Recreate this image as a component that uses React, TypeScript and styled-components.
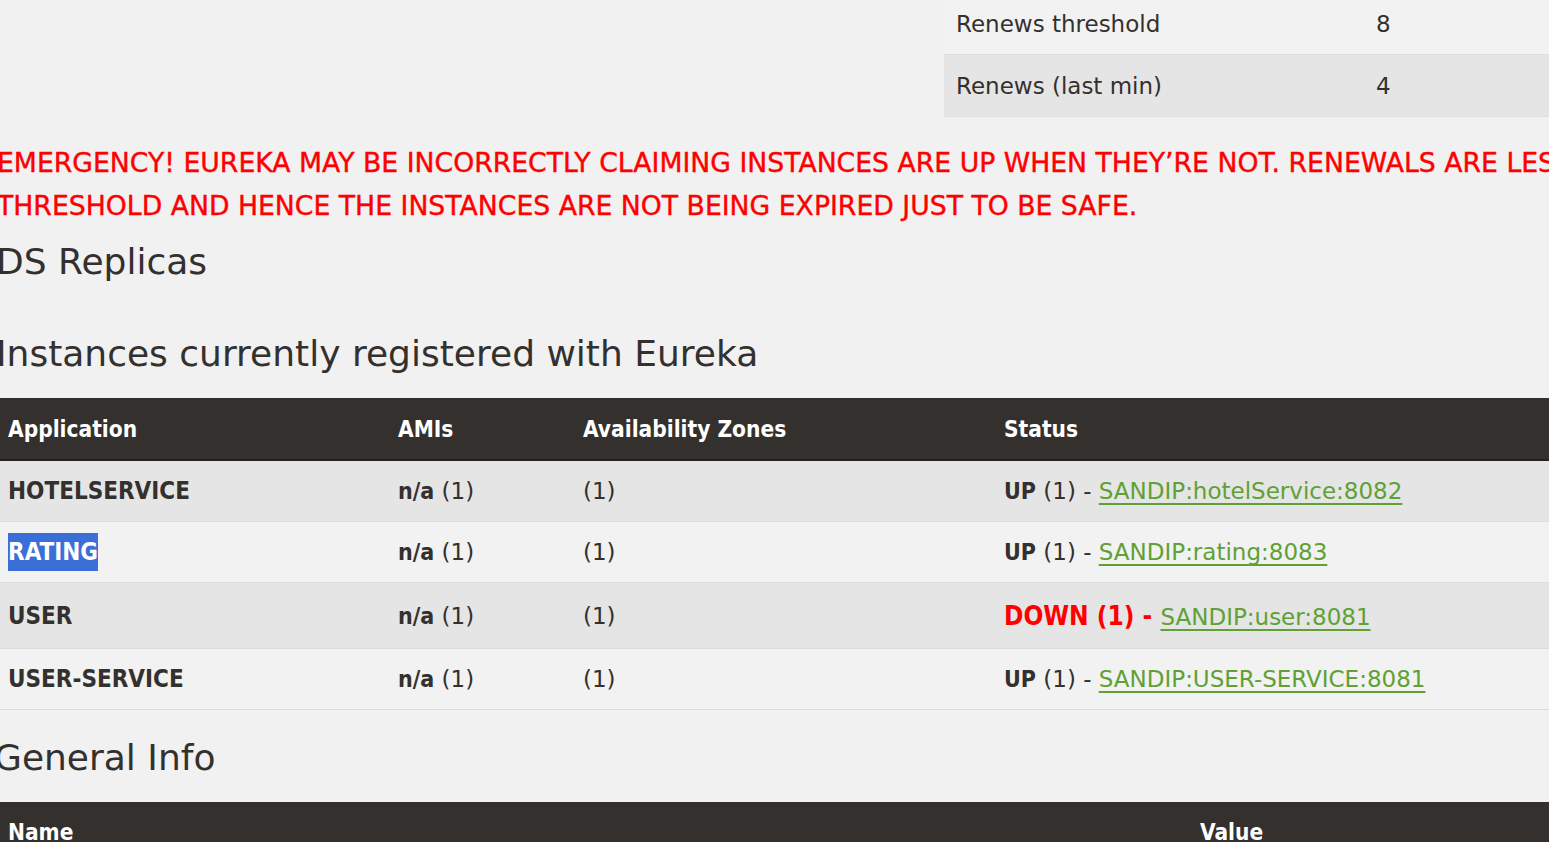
import styled, { createGlobalStyle } from "styled-components";

const Global = createGlobalStyle`
  html, body {
    margin: 0;
    padding: 0;
    background: #f1f1f1;
    overflow: hidden;
  }
  body {
    font-family: "DejaVu Sans", "Noto Sans", sans-serif;
    color: #33302e;
  }
`;

const Page = styled.div`
  width: 1549px;
  margin-top: -7px;
  overflow: hidden;
`;

const StatusGrid = styled.div`
  display: grid;
  grid-template-columns: 944px 1fr;
`;

const InfoTable = styled.table`
  grid-column: 2;
  width: 100%;
  border-collapse: collapse;
  font-size: 23px;
`;

const InfoRow = styled.tr<{ $shade?: boolean }>`
  background: ${(p) => (p.$shade ? "#e5e5e5" : "#f2f2f2")};
  border-bottom: 1px solid #dedede;
  td {
    height: 61px;
    padding: 0 12px;
    vertical-align: middle;
  }
  td:first-child {
    width: 396px;
  }
`;

const Emergency = styled.h4`
  margin: 24px 0 0 -3px;
  font-size: 26.7px;
  font-weight: 400;
  line-height: 43px;
  color: #ff0000;
  -webkit-text-stroke: 0.4px #ff0000;
  text-transform: uppercase;
  white-space: nowrap;
`;

const Heading = styled.h1`
  margin: 0 0 0 -4px;
  font-size: 36px;
  font-weight: 400;
  color: #33302e;
  line-height: 1.2;
`;

const Replicas = styled(Heading)`
  margin-top: 13px;
`;

const InstancesTitle = styled(Heading)`
  margin-top: 49px;
  margin-bottom: 23px;
`;

const GeneralTitle = styled(Heading)`
  margin-top: 26px;
  margin-left: -6px;
`;

const Table = styled.table`
  width: 100%;
  border-collapse: collapse;
  font-size: 23px;
`;

const HeadRow = styled.tr`
  background: #34302d;
  color: #ffffff;
  th {
    text-align: left;
    font-family: "DejaVu Sans Condensed", "DejaVu Sans", sans-serif;
    font-weight: 700;
    font-size: 22.5px;
    height: 61px;
    padding: 0 8px;
    border-bottom: 2px solid #23211f;
  }
`;

const Row = styled.tr<{ $shade?: boolean; $tall?: boolean }>`
  background: ${(p) => (p.$shade ? "#e5e5e5" : "#f2f2f2")};
  border-bottom: 1px solid #dcdcdc;
  td {
    height: ${(p) => (p.$tall ? 65 : 60)}px;
    padding: 0 8px;
    vertical-align: middle;
  }
`;

const Bold = styled.b`
  font-family: "DejaVu Sans Condensed", "DejaVu Sans", sans-serif;
  font-weight: 700;
  font-size: 23px;
`;

const AppName = styled(Bold)<{ $selected?: boolean }>`
  font-size: 24px;
  ${(p) =>
    p.$selected &&
    `
    background: #3a6fd8;
    color: #ffffff;
    padding: 5px 0;
  `}
`;

const Down = styled.span`
  color: #ff0000;
  font-family: "DejaVu Sans Condensed", "DejaVu Sans", sans-serif;
  font-size: 26px;
  font-weight: 700;
`;

const InstanceLink = styled.a`
  color: #5fa134;
  text-decoration: underline;
  text-underline-offset: 4px;
  text-decoration-thickness: 2px;
`;

const GeneralTable = styled(Table)`
  margin-top: 22px;
`;

type Instance = {
  app: string;
  id: string;
  down?: boolean;
  selected?: boolean;
};

const instances: Instance[] = [
  { app: "HOTELSERVICE", id: "SANDIP:hotelService:8082" },
  { app: "RATING", id: "SANDIP:rating:8083", selected: true },
  { app: "USER", id: "SANDIP:user:8081", down: true },
  { app: "USER-SERVICE", id: "SANDIP:USER-SERVICE:8081" },
];

export default function App() {
  return (
    <Page>
      <Global />
      <StatusGrid>
        <InfoTable>
          <tbody>
            <InfoRow>
              <td>Renews threshold</td>
              <td>8</td>
            </InfoRow>
            <InfoRow $shade>
              <td>Renews (last min)</td>
              <td>4</td>
            </InfoRow>
          </tbody>
        </InfoTable>
      </StatusGrid>

      <Emergency>
        Emergency! Eureka may be incorrectly claiming instances are up when they’re not. Renewals are lesser than
        <br />
        threshold and hence the instances are not being expired just to be safe.
      </Emergency>

      <Replicas>DS Replicas</Replicas>

      <InstancesTitle>Instances currently registered with Eureka</InstancesTitle>
      <Table>
        <thead>
          <HeadRow>
            <th style={{ width: "374px" }}>Application</th>
            <th style={{ width: "169px" }}>AMIs</th>
            <th style={{ width: "405px" }}>Availability Zones</th>
            <th>Status</th>
          </HeadRow>
        </thead>
        <tbody>
          {instances.map((it, i) => (
            <Row key={it.app} $shade={i % 2 === 0} $tall={it.down}>
              <td>
                <AppName $selected={it.selected}>{it.app}</AppName>
              </td>
              <td>
                <Bold>n/a</Bold> (1)
              </td>
              <td>(1)</td>
              <td>
                {it.down ? (
                  <Down>DOWN (1) - </Down>
                ) : (
                  <>
                    <Bold>UP</Bold> (1) -{" "}
                  </>
                )}
                <InstanceLink href="#">{it.id}</InstanceLink>
              </td>
            </Row>
          ))}
        </tbody>
      </Table>

      <GeneralTitle>General Info</GeneralTitle>
      <GeneralTable>
        <thead>
          <HeadRow>
            <th style={{ width: "1176px" }}>Name</th>
            <th>Value</th>
          </HeadRow>
        </thead>
      </GeneralTable>
    </Page>
  );
}
